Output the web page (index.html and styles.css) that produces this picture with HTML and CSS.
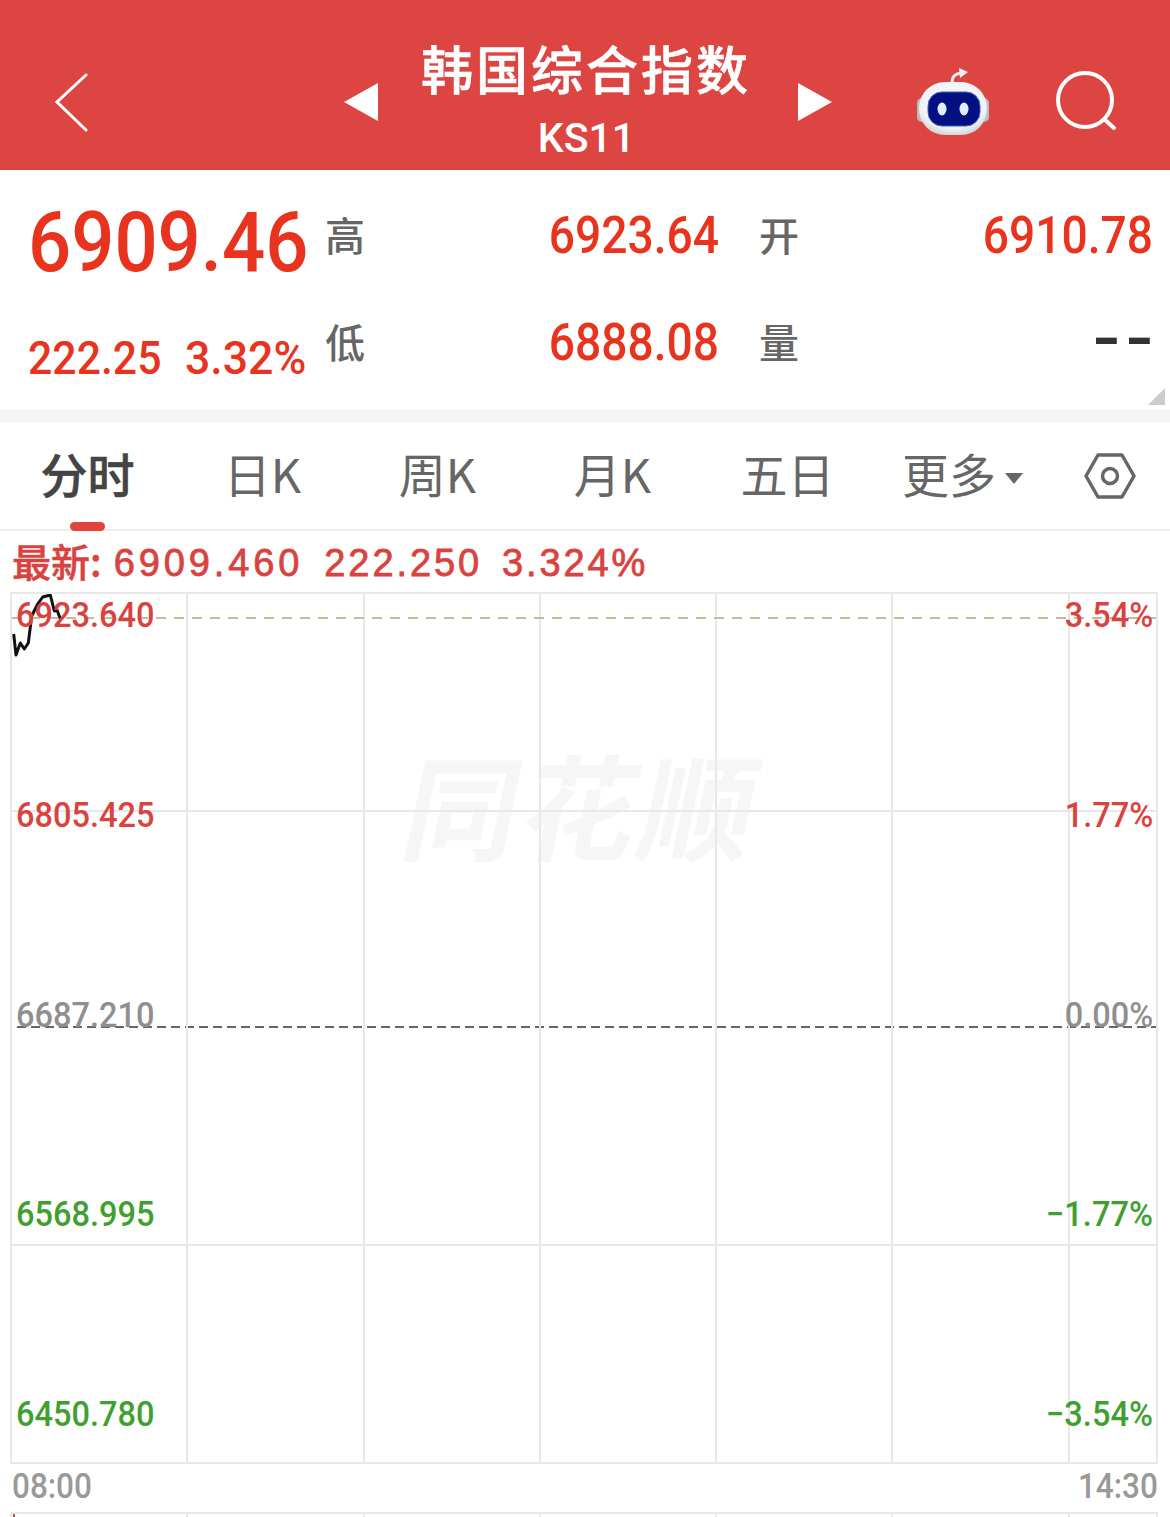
FILE: index.html
```html
<!DOCTYPE html>
<html lang="zh-CN">
<head>
    <meta charset="UTF-8">
    <title>韩国综合指数 KS11</title>
    <link rel="stylesheet" href="styles.css">
</head>
<body>
<header class="topbar">
    <svg class="back" viewBox="0 0 36 60"><path d="M32 3 L3 30 L32 58" /></svg>
    <svg class="prev" viewBox="0 0 36 38"><path d="M1 19 L35 0 L35 38 Z" /></svg>
    <div class="title">
        <div class="title-name">韩国综合指数</div>
        <div class="title-code">KS11</div>
    </div>
    <svg class="next" viewBox="0 0 36 38"><path d="M1 0 L35 19 L1 38 Z" /></svg>
    <svg class="robot" viewBox="0 0 80 76">
        <defs>
            <radialGradient id="head" cx="50%" cy="40%" r="65%">
                <stop offset="0" stop-color="#ffffff" />
                <stop offset="0.75" stop-color="#f0f1f5" />
                <stop offset="1" stop-color="#c8cad0" />
            </radialGradient>
        </defs>
        <path class="antenna" d="M38 19 C38 12 41 10 47 9" />
        <path class="antenna-tip" d="M45 4 L54 8 L46 14 Z" />
        <rect class="ear" x="3" y="34" width="10" height="24" rx="5" />
        <rect class="ear" x="65" y="34" width="10" height="24" rx="5" />
        <rect x="5" y="18" width="68" height="53" rx="26" fill="url(#head)" />
        <rect class="face" x="14" y="28" width="52" height="34" rx="14" />
        <ellipse class="eye" cx="28" cy="45" rx="4.5" ry="6.5" />
        <ellipse class="eye" cx="50" cy="45" rx="4.5" ry="6.5" />
    </svg>
    <svg class="search" viewBox="0 0 64 64"><circle cx="31" cy="30" r="27" /><path d="M50 49 L60 58" /></svg>
</header>

<section class="quote">
    <div class="q-main"><span class="num-big">6909.46</span></div>
    <div class="q-label">高</div>
    <div class="q-val"><span class="num">6923.64</span></div>
    <div class="q-label q-label-2">开</div>
    <div class="q-val"><span class="num">6910.78</span></div>

    <div class="q-change"><span class="num-mid">222.25</span><span class="num-pct">3.32%</span></div>
    <div class="q-label">低</div>
    <div class="q-val"><span class="num">6888.08</span></div>
    <div class="q-label q-label-2">量</div>
    <div class="q-val"><span class="num-empty">--</span></div>
    <i class="corner"></i>
</section>

<nav class="tabs">
    <a class="tab active">分时</a>
    <a class="tab">日K</a>
    <a class="tab">周K</a>
    <a class="tab">月K</a>
    <a class="tab">五日</a>
    <a class="tab">更多<i class="caret"></i></a>
    <svg class="setting" viewBox="0 0 52 46">
        <path d="M14 2 L38 2 L50 23 L38 44 L14 44 L2 23 Z" />
        <circle cx="26" cy="23" r="7.5" />
    </svg>
</nav>

<div class="latest">
    <span class="latest-name">最新:</span>
    <span class="latest-num latest-price">6909.460</span>
    <span class="latest-num">222.250</span>
    <span class="latest-num">3.324%</span>
</div>

<div class="chart">
    <div class="watermark">同花顺</div>
    <div class="rows">
        <div class="row"></div>
        <div class="row mid"></div>
        <div class="row"></div>
        <div class="row"></div>
    </div>
    <div class="cols">
        <div class="col"></div><div class="col"></div><div class="col"></div>
        <div class="col"></div><div class="col"></div><div class="col"></div>
    </div>
    <div class="dash-high"></div>
    <svg class="line" viewBox="0 0 60 70"><polyline points="1.7,40 4,61 8.3,49 12.3,55 16.3,49 19.7,22 25.7,10 30.7,3 38.3,1 42.3,17 45,16 48.3,24.7" /></svg>
    <div class="axis axis-left">
        <span class="num-axis up">6923.640</span>
        <span class="num-axis up">6805.425</span>
        <span class="num-axis flat">6687.210</span>
        <span class="num-axis down">6568.995</span>
        <span class="num-axis down">6450.780</span>
    </div>
    <div class="axis axis-right">
        <span class="num-axis up">3.54%</span>
        <span class="num-axis up">1.77%</span>
        <span class="num-axis flat">0.00%</span>
        <span class="num-axis down">−1.77%</span>
        <span class="num-axis down">−3.54%</span>
    </div>
</div>

<div class="times">
    <span class="time-l">08:00</span>
    <span class="time-r">14:30</span>
</div>

<div class="chart-next">
    <i class="tick"></i>
    <div class="col"></div><div class="col"></div><div class="col"></div>
    <div class="col"></div><div class="col"></div><div class="col"></div>
</div>
</body>
</html>
```

FILE: styles.css
```css
html, body {
    margin: 0;
    padding: 0;
}
body {
    width: 1170px;
    height: 1517px;
    overflow: hidden;
    background: #fff;
    font-family: Roboto, "Noto Sans CJK SC", sans-serif;
}

/* top bar */
.topbar {
    display: flex;
    align-items: center;
    box-sizing: border-box;
    height: 170px;
    padding-top: 34px;
    background: #dd4542;
    color: #fff;
}
.back {
    width: 36px;
    height: 60px;
    margin-left: 54px;
    fill: none;
    stroke: #fff;
    stroke-width: 3;
    stroke-linecap: round;
}
.prev, .next {
    width: 36px;
    height: 38px;
    fill: #fff;
}
.prev {
    margin-left: 253px;
}
.next {
    margin-left: 49px;
}
.title {
    align-self: flex-start;
    width: 327px;
    margin-left: 42px;
    text-align: center;
}
.title-name {
    font-family: "Noto Sans CJK SC", sans-serif;
    font-size: 52px;
    font-weight: 500;
    line-height: 68px;
    letter-spacing: 3px;
    white-space: nowrap;
    -webkit-text-stroke: 0.6px #fff;
}
.title-code {
    padding-left: 4px;
    font-size: 41px;
    font-weight: 500;
    line-height: 72px;
}
.robot {
    width: 80px;
    height: 76px;
    margin-left: 81px;
}
.antenna {
    fill: none;
    stroke: #eceef2;
    stroke-width: 3;
}
.antenna-tip {
    fill: #eceef2;
}
.ear {
    fill: #b9bcc4;
}
.face {
    fill: #04107f;
    stroke: #3f5fc8;
    stroke-width: 1;
}
.eye {
    fill: #dceeff;
}
.search {
    width: 64px;
    height: 64px;
    margin-left: 60px;
    fill: none;
    stroke: #fff;
    stroke-width: 4;
    stroke-linecap: round;
}

/* quote block */
.quote {
    position: relative;
    display: grid;
    grid-template-columns: 297px 45px 349px 85px 349px;
    grid-template-rows: 107px 107px;
    align-items: center;
    box-sizing: border-box;
    width: 1170px;
    height: 252px;
    padding-top: 12px;
    padding-left: 28px;
    border-bottom: 12px solid #f5f5f5;
    color: #e8331f;
}
.q-main {
    margin-top: 14px;
    white-space: nowrap;
}
.q-change {
    display: flex;
    padding-top: 31px;
    white-space: nowrap;
}
.q-label {
    font-family: "Noto Sans CJK SC", sans-serif;
    font-size: 40px;
    font-weight: 500;
    color: #666;
    margin-top: -3px;
}
.q-label-2 {
    margin-left: 40px;
}
.q-val {
    text-align: right;
}
.num-big, .num-mid, .num-pct, .num, .num-axis {
    display: inline-block;
    white-space: nowrap;
}
.num-big {
    font-size: 84px;
    font-weight: 500;
    line-height: 90px;
    transform: scaleX(0.905);
    transform-origin: left;
}
.num-mid, .num-pct {
    flex: none;
    font-size: 46px;
    font-weight: 500;
    line-height: 50px;
    transform: scaleX(0.93);
    transform-origin: left;
}
.num-mid {
    width: 157px;
}
.num-pct {
    transform: scaleX(0.97);
}
.num {
    font-size: 51px;
    font-weight: 500;
    line-height: 56px;
    transform: scaleX(0.905);
    transform-origin: right;
}
.num-empty {
    display: inline-block;
    font-size: 58px;
    font-weight: 700;
    line-height: 56px;
    letter-spacing: 2.6px;
    margin-right: -5px;
    margin-bottom: 10px;
    color: #333;
    transform: scaleX(1.3);
    transform-origin: right;
}
.corner {
    position: absolute;
    right: 5px;
    bottom: 5px;
    width: 0;
    height: 0;
    border-left: 17px solid transparent;
    border-bottom: 17px solid #ccc;
}

/* tabs */
.tabs {
    display: grid;
    grid-template-columns: repeat(6, 175px) 1fr;
    align-items: center;
    box-sizing: border-box;
    height: 109px;
    border-bottom: 2px solid #eee;
}
.tab {
    position: relative;
    height: 108px;
    font-family: "Noto Sans CJK SC", sans-serif;
    font-size: 47px;
    line-height: 102px;
    text-align: center;
    color: #666;
}
.tab.active {
    font-weight: 500;
    color: #444;
    -webkit-text-stroke: 0.6px #444;
}
.tab.active::after {
    content: "";
    position: absolute;
    left: 70px;
    bottom: -1px;
    width: 35px;
    height: 9px;
    border-radius: 5px;
    background: #e2433a;
}
.caret {
    display: inline-block;
    width: 0;
    height: 0;
    margin-left: 9px;
    vertical-align: 9px;
    border-left: 9px solid transparent;
    border-right: 9px solid transparent;
    border-top: 11px solid #666;
}
.setting {
    width: 52px;
    height: 46px;
    margin-left: 34px;
    fill: none;
    stroke: #666;
    stroke-width: 3.5;
    stroke-linejoin: round;
}

/* latest row */
.latest {
    display: flex;
    align-items: center;
    gap: 20px;
    height: 61px;
    padding-left: 12px;
    color: #d9433f;
}
.latest-name {
    font-family: "Noto Sans CJK SC", sans-serif;
    font-size: 39px;
    font-weight: 500;
    margin-right: -8px;
    margin-bottom: 4px;
    -webkit-text-stroke: 0.5px #d9433f;
}
.latest-num {
    padding-top: 4px;
    font-family: "Liberation Sans", sans-serif;
    font-size: 38px;
    font-weight: 400;
    letter-spacing: 2.9px;
    -webkit-text-stroke: 0.8px #d9433f;
}
.latest-price {
    margin-right: 1px;
    letter-spacing: 3.9px;
}

/* chart */
.chart {
    position: relative;
    box-sizing: border-box;
    width: 1148px;
    height: 872px;
    margin-left: 10px;
    border: 2px solid #e8e8e8;
}
.watermark {
    position: absolute;
    left: 396px;
    top: 139px;
    font-family: "Noto Sans CJK SC", sans-serif;
    font-size: 114px;
    font-weight: 700;
    line-height: 140px;
    letter-spacing: 4px;
    color: #f6f6f6;
    transform: skewX(-12deg);
    white-space: nowrap;
}
.rows {
    position: absolute;
    inset: 0;
    display: flex;
    flex-direction: column;
}
.row {
    flex: 1;
    border-bottom: 2px solid #e8e8e8;
}
.row:last-child {
    border-bottom: 0;
}
.row.mid {
    border-bottom: 0;
    background: linear-gradient(to right, #666 0 9px, transparent 9px) repeat-x bottom / 14px 2px;
}
.cols, .chart-next {
    display: flex;
}
.cols {
    position: absolute;
    inset: 0;
}
.col {
    flex: 0 0 176.3px;
    box-sizing: border-box;
    border-right: 2px solid #e8e8e8;
}
.dash-high {
    position: absolute;
    left: 0;
    right: 0;
    top: 23px;
    height: 2px;
    background: linear-gradient(to right, #c9b99a 0 10px, transparent 10px) 0 0 / 18px 2px repeat-x;
}
.line {
    position: absolute;
    left: 0;
    top: 0;
    width: 60px;
    height: 70px;
    fill: none;
    stroke: #111;
    stroke-width: 3;
    stroke-linejoin: round;
}
.axis {
    position: absolute;
    top: 0;
    height: 843px;
    display: flex;
    flex-direction: column;
    justify-content: space-between;
    font-size: 35px;
    font-weight: 500;
    line-height: 44px;
}
.axis-left {
    left: 4px;
    align-items: flex-start;
}
.axis-left .num-axis {
    transform: scaleX(0.93);
    transform-origin: left;
}
.axis-right {
    right: 3px;
    align-items: flex-end;
}
.axis-right .num-axis {
    transform: scaleX(0.93);
    transform-origin: right;
}
.up {
    color: #d9433f;
}
.flat {
    color: #8f8f8f;
}
.down {
    color: #3f9f2f;
}

/* time axis */
.times {
    display: flex;
    justify-content: space-between;
    box-sizing: border-box;
    width: 1170px;
    height: 48px;
    padding: 0 12px;
    font-size: 35px;
    font-weight: 500;
    line-height: 45px;
    color: #999;
}
.time-l, .time-r {
    display: inline-block;
    transform: scaleX(0.9);
    transform-origin: left;
}
.time-r {
    transform-origin: right;
}
.chart-next {
    position: relative;
    box-sizing: border-box;
    width: 1148px;
    height: 6px;
    margin-left: 10px;
    border-top: 2px solid #e8e8e8;
    border-left: 2px solid #e8e8e8;
    border-right: 2px solid #e8e8e8;
}
.tick {
    position: absolute;
    left: 1px;
    top: 0;
    width: 2px;
    height: 4px;
    background: #d9433f;
}
```
